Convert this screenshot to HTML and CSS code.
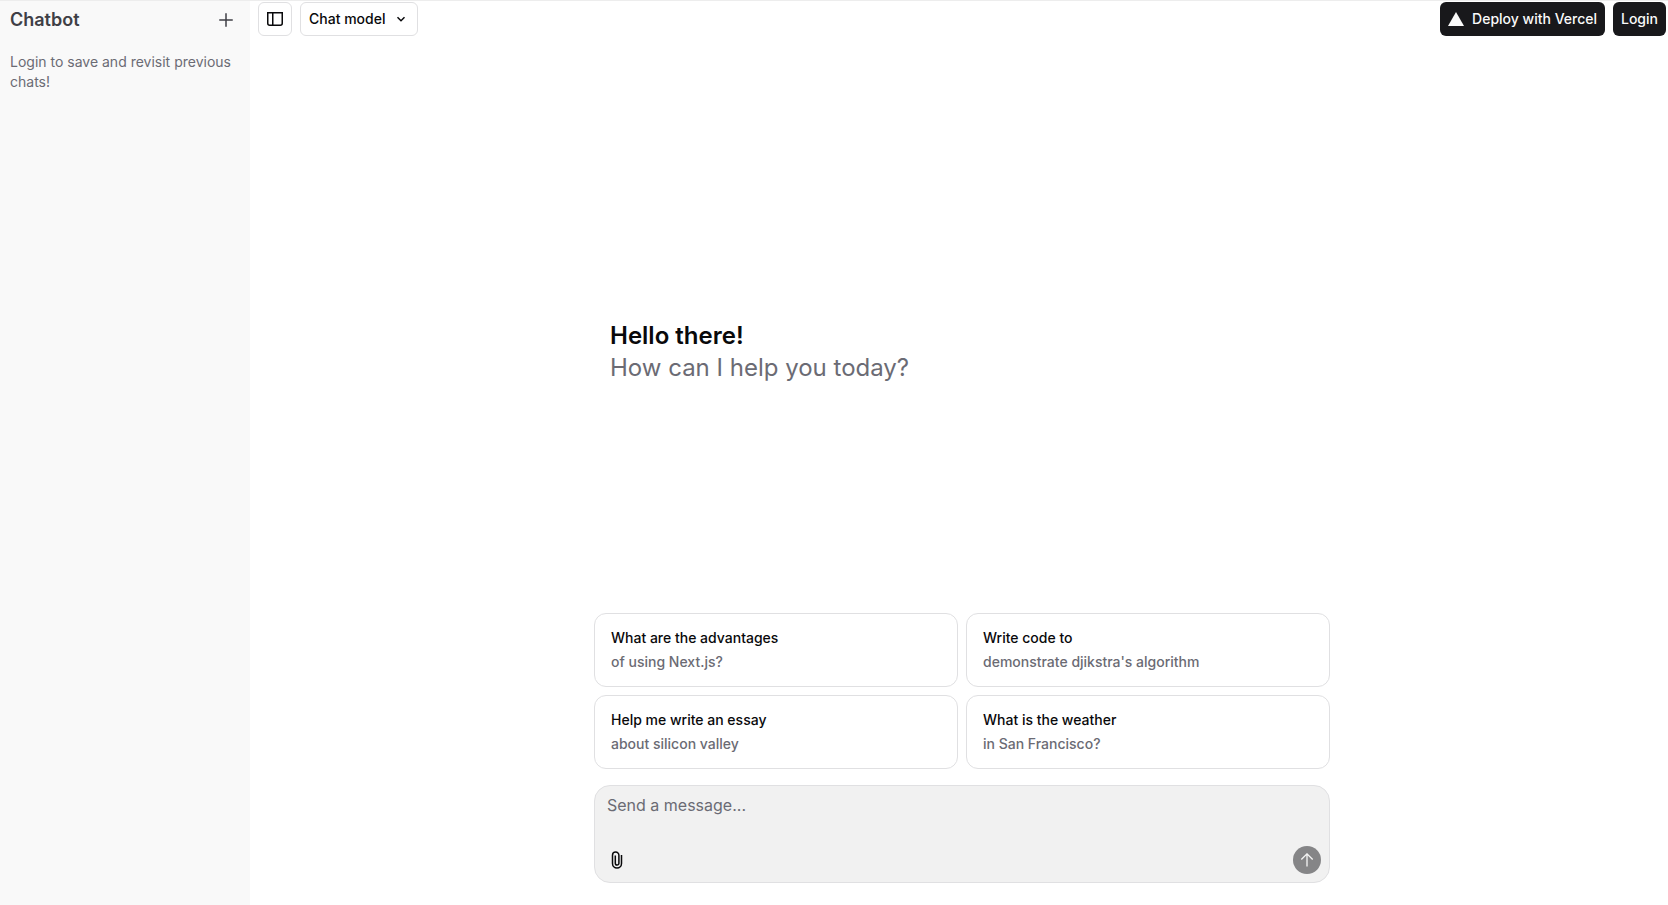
FILE: index.html
```
<!DOCTYPE html>
<html lang="en">
<head>
    <meta charset="UTF-8">
    <meta name="viewport" content="width=device-width, initial-scale=1.0">
    <title>Chatbot</title>
    <link rel="stylesheet" href="styles.css">
</head>
<body>
    <aside class="sidebar">
        <div class="sidebar-header">
            <a class="brand" href="#">Chatbot</a>
            <button class="icon-button" type="button" aria-label="New chat">
                <svg width="16" height="16" viewBox="0 0 16 16" fill="none" stroke="currentColor" stroke-width="1.5"><path d="M8 1.25v13.5M1.25 8h13.5"/></svg>
            </button>
        </div>
        <p class="sidebar-note">Login to save and revisit previous chats!</p>
    </aside>

    <main class="main">
        <header class="toolbar">
            <button class="button outline square" type="button" aria-label="Toggle sidebar">
                <svg width="16" height="16" viewBox="0 0 16 16" fill="none" stroke="currentColor" stroke-width="1.5"><path d="M.75 1.75h14.5v10.5a2 2 0 0 1-2 2H2.75a2 2 0 0 1-2-2zM5.75 2v12"/></svg>
            </button>
            <button class="button outline" type="button">
                Chat model
                <svg width="16" height="16" viewBox="0 0 16 16" fill="none" stroke="currentColor" stroke-width="1.5"><path d="M4.5 6.25 8 9.75l3.5-3.5"/></svg>
            </button>
            <a class="button dark push" href="#">
                <svg width="16" height="16" viewBox="0 0 16 16" fill="currentColor"><path d="M8 1l8 14H0z"/></svg>
                Deploy with Vercel
            </a>
            <a class="button dark" href="#">Login</a>
        </header>

        <div class="chat">
            <section class="greeting">
                <h1>Hello there!</h1>
                <p>How can I help you today?</p>
            </section>

            <div class="suggestions">
                <button class="card" type="button"><span>What are the advantages</span><span class="muted">of using Next.js?</span></button>
                <button class="card" type="button"><span>Write code to</span><span class="muted">demonstrate djikstra's algorithm</span></button>
                <button class="card" type="button"><span>Help me write an essay</span><span class="muted">about silicon valley</span></button>
                <button class="card" type="button"><span>What is the weather</span><span class="muted">in San Francisco?</span></button>
            </div>

            <form class="composer">
                <textarea rows="1" placeholder="Send a message..." aria-label="Message"></textarea>
                <div class="composer-actions">
                    <button class="icon-button" type="button" aria-label="Attach a file">
                        <svg width="14" height="18" viewBox="0 0 14 18" fill="none" stroke="currentColor" stroke-width="1.5"><path d="M11.5 4v8.5a4.5 4.5 0 0 1-9 0V4.2a3.2 3.2 0 0 1 6.4 0v8a1.8 1.8 0 0 1-3.6 0V4.5"/></svg>
                    </button>
                    <button class="send" type="submit" aria-label="Send message" disabled>
                        <svg width="14" height="14" viewBox="0 0 16 16" fill="none" stroke="currentColor" stroke-width="1.5"><path d="M8 15.5V2M1.5 7.5 8 1l6.5 6.5"/></svg>
                    </button>
                </div>
            </form>
        </div>
    </main>
</body>
</html>
```

FILE: styles.css
```
* {
    box-sizing: border-box;
}
body {
    display: flex;
    min-height: 100vh;
    margin: 0;
    font-family: Inter, sans-serif;
    font-size: 14px;
    line-height: 20px;
    color: #09090b;
    background-color: #fff;
    box-shadow: inset 0 1px 0 #ededed;
}
h1, p {
    margin: 0;
}
a {
    color: inherit;
    text-decoration: none;
}
button, textarea {
    font: inherit;
    color: inherit;
}
button {
    cursor: pointer;
}
svg {
    flex-shrink: 0;
}
.sidebar {
    flex: 0 0 250px;
    padding: 2px 10px 0;
    background-color: #f9f9f9;
    color: #3f3f46;
    box-shadow: inset 0 1px 0 #ededed;
}
.sidebar-header {
    display: flex;
    justify-content: space-between;
    align-items: center;
    height: 36px;
}
.brand {
    font-size: 18px;
    font-weight: 600;
}
.icon-button {
    display: flex;
    justify-content: center;
    align-items: center;
    width: 28px;
    height: 28px;
    padding: 0;
    border: none;
    background: none;
}
.sidebar-note {
    margin-top: 14px;
    color: #6b6b74;
}
.main {
    flex: 1;
    display: flex;
    flex-direction: column;
    min-width: 0;
}
.toolbar {
    display: flex;
    gap: 8px;
    padding: 2px 2px 0 8px;
}
.button {
    display: flex;
    justify-content: center;
    align-items: center;
    gap: 8px;
    height: 34px;
    padding: 0 8px;
    border-radius: 6px;
    font-weight: 500;
    white-space: nowrap;
}
.outline {
    border: 1px solid #e0e0e2;
    background-color: #fff;
}
.square {
    width: 34px;
}
.dark {
    background-color: #18181b;
    color: #fafafa;
}
.push {
    margin-left: auto;
}
.chat {
    flex: 1;
    display: flex;
    flex-direction: column;
    align-items: center;
    padding: 0 16px 22px 22px;
}
.greeting,
.suggestions,
.composer {
    width: 100%;
    max-width: 736px;
}
.greeting {
    flex: 1;
    display: flex;
    flex-direction: column;
    justify-content: center;
    padding: 54px 16px 0;
    font-size: 24px;
    line-height: 32px;
}
.greeting h1 {
    font-size: 24px;
    font-weight: 600;
}
.greeting p {
    color: #6b6b74;
}
.suggestions {
    display: grid;
    grid-template-columns: 1fr 1fr;
    gap: 8px;
}
.card {
    display: flex;
    flex-direction: column;
    gap: 4px;
    padding: 14px 16px;
    border: 1px solid #e0e0e2;
    border-radius: 12px;
    background-color: #fff;
    font-weight: 500;
    text-align: left;
}
.muted {
    color: #6b6b74;
}
.composer {
    margin-top: 16px;
    padding: 7px 8px 8px;
    border: 1px solid #e0e0e2;
    border-radius: 16px;
    background-color: #f1f1f1;
}
.composer textarea {
    display: block;
    width: 100%;
    height: 53px;
    padding: 0 4px;
    border: none;
    outline: none;
    background: none;
    resize: none;
    font-size: 16px;
    line-height: 24px;
}
.composer textarea::placeholder {
    color: #6b6b74;
}
.composer-actions {
    display: flex;
    justify-content: space-between;
    align-items: center;
}
.send {
    display: flex;
    justify-content: center;
    align-items: center;
    width: 28px;
    height: 28px;
    padding: 0;
    border: none;
    border-radius: 50%;
    background-color: #858587;
    color: #f4f4f4;
}
```
